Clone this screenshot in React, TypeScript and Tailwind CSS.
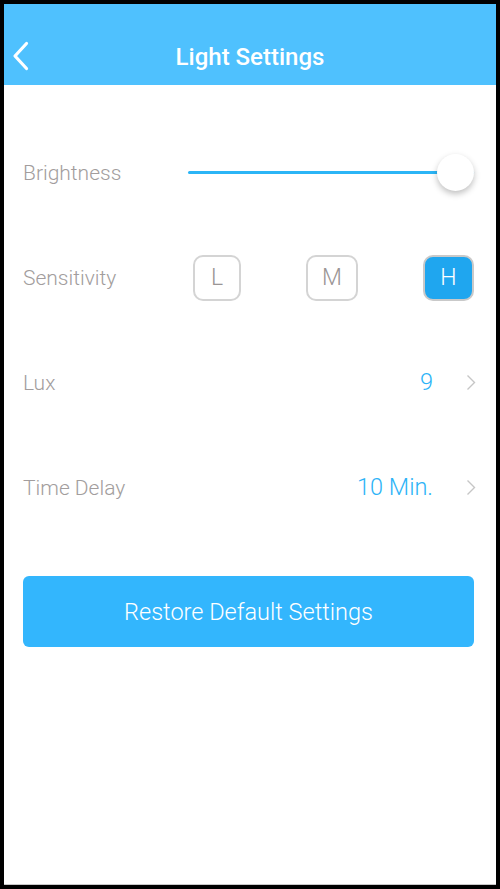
import { useState } from 'react'

type Level = 'L' | 'M' | 'H'

const LEVELS: { key: Level; width: string }[] = [
  { key: 'L', width: 'w-[48px]' },
  { key: 'M', width: 'w-[52px]' },
  { key: 'H', width: 'w-[51px]' },
]

function BackIcon() {
  return (
    <svg width="20" height="30" viewBox="0 0 20 30" fill="none">
      <path d="M15.5 2.5 L4 15 L15.5 27.5" stroke="white" strokeWidth="3.2" strokeLinecap="round" strokeLinejoin="round" />
    </svg>
  )
}

function Chevron() {
  return (
    <svg width="10" height="17" viewBox="0 0 10 17" fill="none">
      <path d="M1.5 1.5 L8.5 8.5 L1.5 15.5" stroke="#c6c6c6" strokeWidth="1.4" />
    </svg>
  )
}

function Row({ label, children }: { label: string; children: React.ReactNode }) {
  return (
    <div className="flex h-[105px] items-center">
      <div className="w-[165px] shrink-0 pt-[2px] text-[21px] font-light text-[#a29d9d]">{label}</div>
      <div className="flex flex-1 items-center">{children}</div>
    </div>
  )
}

function ValueRow({ label, value }: { label: string; value: string }) {
  return (
    <Row label={label}>
      <div className="flex-1 pt-[1px] text-right text-[23.5px] font-light text-[#2cb3f7]">{value}</div>
      <div className="ml-[33px] mr-[-2px] flex items-center">
        <Chevron />
      </div>
    </Row>
  )
}

export default function App() {
  const [level, setLevel] = useState<Level>('H')

  return (
    <div className="h-[889px] w-[500px] bg-black p-[4px] font-['Roboto','Liberation_Sans',sans-serif]">
      <div className="flex h-full flex-col border-b border-[#c8c8c8] bg-white">
        <header className="relative flex h-[81px] shrink-0 items-end justify-center bg-[#4fc1fe] pb-[16px]">
          <button type="button" className="absolute left-[7px] top-[37px]">
            <BackIcon />
          </button>
          <h1 className="text-[24px] font-medium leading-none text-white">Light Settings</h1>
        </header>

        <div className="pl-[19px] pr-[22px] pt-[35px]">
          <Row label="Brightness">
            <div className="relative flex h-[40px] flex-1 items-center">
              <div className="h-[3px] w-full rounded-full bg-[#2bb5f6]" />
              <div className="absolute right-[0px] top-[1px] h-[37px] w-[37px] rounded-full bg-white shadow-[0_3px_6px_rgba(0,0,0,0.25)]" />
            </div>
          </Row>

          <Row label="Sensitivity">
            <div className="flex flex-1 items-center justify-between pl-[5px]">
              {LEVELS.map(({ key, width }) => (
                <button
                  key={key}
                  type="button"
                  onClick={() => setLevel(key)}
                  className={`flex h-[46px] ${width} items-center justify-center rounded-[10px] border-2 pt-[2px] text-[23px] font-light ${
                    level === key
                      ? 'border-[#c9c9c9] bg-[#1fa6ef] text-white'
                      : 'border-[#d4d4d4] bg-white text-[#9a9595]'
                  }`}
                >
                  {key}
                </button>
              ))}
            </div>
          </Row>

          <ValueRow label="Lux" value="9" />
          <ValueRow label="Time Delay" value="10 Min." />

          <button
            type="button"
            className="mt-[36px] flex h-[71px] w-full items-center justify-center rounded-[6px] bg-[#33b6fd] pt-[3px] text-[23.5px] font-light text-white"
          >
            Restore Default Settings
          </button>
        </div>
      </div>
    </div>
  )
}
